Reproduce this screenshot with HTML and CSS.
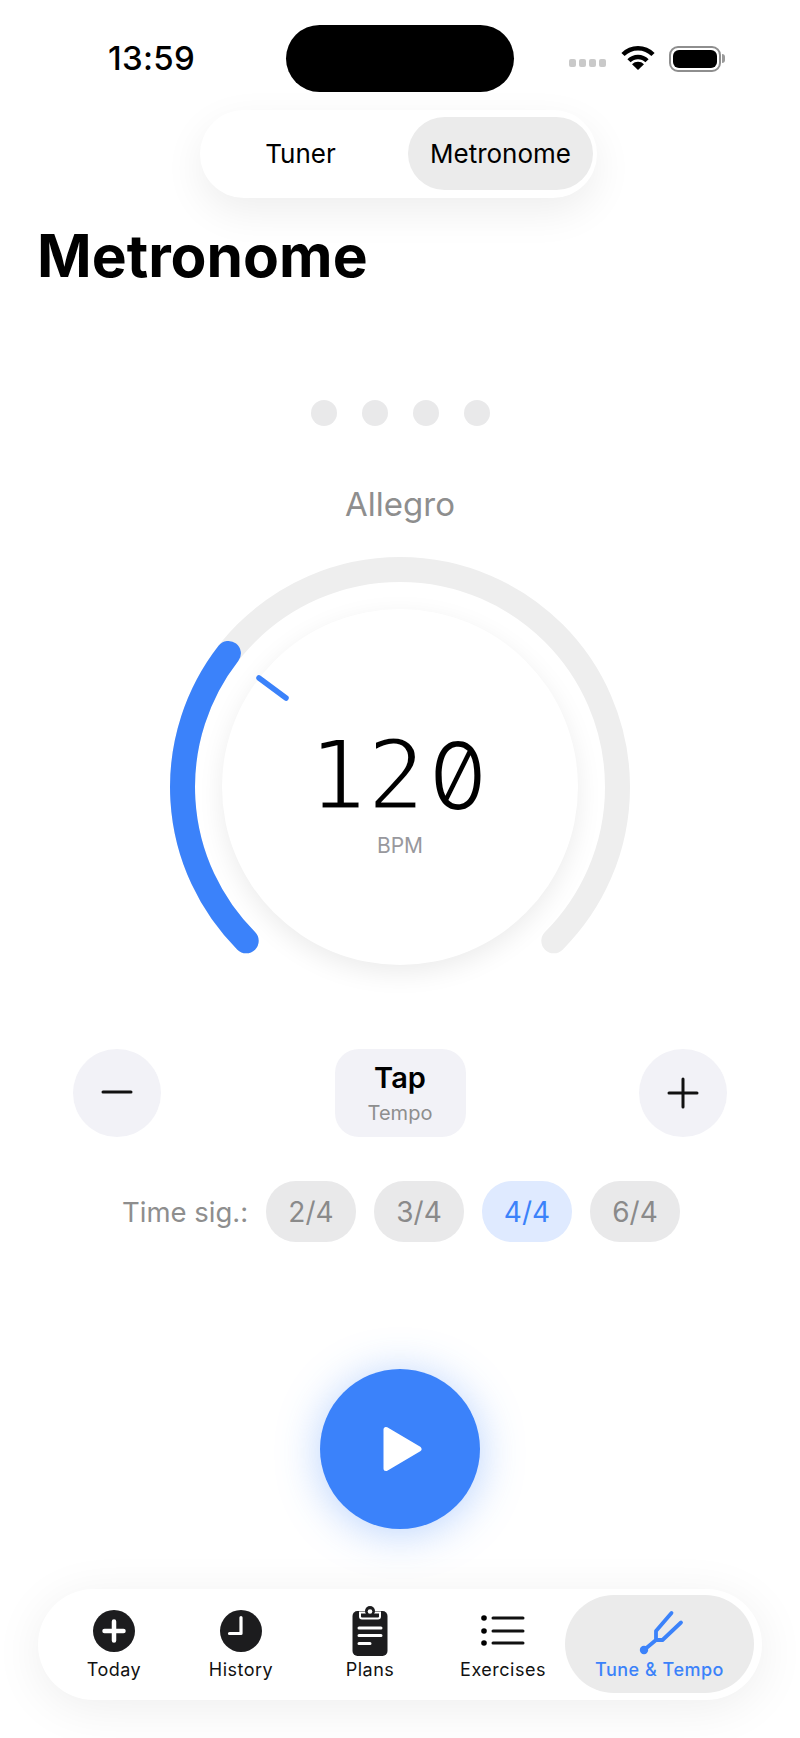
FILE: index.html
```html
<!DOCTYPE html>
<html lang="en">
<head>
<meta charset="utf-8">
<title>Metronome</title>
<link rel="stylesheet" href="styles.css">
</head>
<body>
<div class="screen">
  <header class="status">
    <div class="time">13:59</div>
    <div class="island"></div>
    <div class="status-right">
      <div class="signal"><i></i><i></i><i></i><i></i></div>
      <svg class="wifi" viewBox="0 0 34 25"><path d="M2 9.5A21 21 0 0 1 32 9.500" /><path d="M8 15.800A12.500 12.500 0 0 1 26 15.800" /><path class="wedge" d="M17 25L11 19.200A8.500 8.500 0 0 1 23 19.200Z"/></svg>
      <div class="battery"><div class="battery-fill"></div></div>
      <div class="battery-nub"></div>
    </div>
  </header>

  <nav class="segment">
    <div class="seg-item">Tuner</div>
    <div class="seg-item seg-active">Metronome</div>
  </nav>

  <h1 class="title">Metronome</h1>

  <div class="beats"><i></i><i></i><i></i><i></i></div>
  <div class="tempo-name">Allegro</div>

  <section class="dial">
    <div class="face">
      <div class="bpm"><span class="bpm-digit">1</span><span class="bpm-digit">2</span><span class="bpm-zero">0</span></div>
      <div class="bpm-label">BPM</div>
    </div>
    <svg class="arcs" viewBox="0 0 460 460">
      <path class="track" d="M76.200 383.800A217.500 217.500 0 1 1 383.800 383.800"/>
      <path class="fill" d="M76.200 383.800A217.500 217.500 0 0 1 58.400 96.400"/>
      <line class="tick" x1="89" y1="121" x2="116" y2="141"/>
    </svg>
  </section>

  <section class="controls">
    <button class="round-btn"><svg viewBox="0 0 32 32"><path d="M2 15h28"/></svg></button>
    <button class="tap"><span class="tap-main">Tap</span><span class="tap-sub">Tempo</span></button>
    <button class="round-btn"><svg viewBox="0 0 32 32"><path d="M16 2v28M2 16h28"/></svg></button>
  </section>

  <section class="sigs">
    <span class="sig-label">Time sig.:</span>
    <span class="sig">2/4</span>
    <span class="sig">3/4</span>
    <span class="sig sig-active">4/4</span>
    <span class="sig">6/4</span>
  </section>

  <button class="play"><svg viewBox="0 0 40 46"><path d="M3 3.500V42.500L36 23Z"/></svg></button>

  <nav class="tabs">
    <div class="tab">
      <svg class="tab-icon" viewBox="0 0 42 50"><circle cx="21" cy="25" r="21" fill="#1c1c1e"/><path d="M21 15.500v19M11.500 25h19" stroke="#fff" stroke-width="4.500" stroke-linecap="round" fill="none"/></svg>
      <span>Today</span>
    </div>
    <div class="tab">
      <svg class="tab-icon" viewBox="0 0 42 50"><circle cx="21" cy="25" r="21" fill="#1c1c1e"/><path d="M21 11.500V27.500H9.500" stroke="#fff" stroke-width="3.200" stroke-linecap="round" stroke-linejoin="round" fill="none"/></svg>
      <span>History</span>
    </div>
    <div class="tab">
      <svg class="tab-icon" viewBox="0 0 36 50"><rect x="0.500" y="5" width="35" height="45" rx="5" fill="#1c1c1e"/><path d="M8 6.500h20v4a2 2 0 0 1-2 2H10a2 2 0 0 1-2-2z" fill="#1c1c1e" stroke="#fff" stroke-width="2"/><circle cx="18" cy="5" r="5" fill="#1c1c1e"/><circle cx="18" cy="5.500" r="2.300" fill="#fff"/><path d="M7 22h22M7 29.500h22M7 37.500h11" stroke="#fff" stroke-width="3" stroke-linecap="round"/></svg>
      <span>Plans</span>
    </div>
    <div class="tab">
      <svg class="tab-icon" viewBox="0 0 44 50"><circle cx="3" cy="12" r="2.800"/><circle cx="3" cy="25" r="2.800"/><circle cx="3" cy="37" r="2.800"/><path d="M12 12h30M12 25h30M12 37h30" stroke="#111" stroke-width="3" stroke-linecap="round"/></svg>
      <span>Exercises</span>
    </div>
    <div class="tab tab-active">
      <svg class="tab-icon fork" viewBox="0 0 46 50"><circle cx="5" cy="44" r="4.200" fill="#3b82fa"/><path d="M5 44L17 34H23.500L42 16.500M17 34V25L32.500 7" stroke="#3b82fa" stroke-width="3.800" stroke-linecap="round" stroke-linejoin="round" fill="none"/></svg>
      <span>Tune &amp; Tempo</span>
    </div>
  </nav>
</div>
</body>
</html>
```

FILE: styles.css
```css
* { box-sizing: border-box; }
html, body { margin: 0; padding: 0; background: #fff; }
body { font-family: Inter, "Liberation Sans", sans-serif; color: #000; }
button { font: inherit; border: 0; padding: 0; color: inherit; }

.screen { width: 800px; height: 1738px; overflow: hidden; display: flex; flex-direction: column; }

.status { display: grid; grid-template-columns: 286px 228px 1fr; height: 67px; margin-top: 25px; align-items: center; }
.time { font-size: 33px; font-weight: 500; padding-left: 108px; line-height: 1; letter-spacing: 0.3px; }
.island { height: 67px; background: #000; border-radius: 34px; }
.status-right { display: flex; align-items: center; padding-left: 55px; }
.signal { display: flex; gap: 3px; margin-top: 9px; margin-right: 15px; }
.signal i { width: 7px; height: 8px; background: #c9c9c9; border-radius: 2px; }
.wifi { width: 34px; height: 25px; fill: none; stroke: #000; stroke-width: 4.5; margin-right: 14px; margin-top: -2px; }
.wifi .wedge { fill: #000; stroke: none; }
.battery { width: 52px; height: 26px; border: 2px solid #8e8e8e; border-radius: 9px; padding: 2px; }
.battery-fill { width: 100%; height: 100%; background: #000; border-radius: 6px; }
.battery-nub { width: 3px; height: 9px; background: #9a9a9a; border-radius: 0 3px 3px 0; margin-left: 1px; }

.segment { align-self: flex-start; margin: 18px 0 0 200px; width: 397px; height: 88px; background: #fff; border-radius: 44px; padding: 7px 4px 8px 0; display: flex; box-shadow: 0 14px 40px rgba(0,0,0,.07); }
.seg-item { display: flex; align-items: center; justify-content: center; font-size: 26px; border-radius: 37px; }
.seg-item:first-child { flex: 1; padding-right: 7px; }
.seg-active { width: 185px; background: #ebebeb; }

.title { margin: 23px 0 0 37px; font-size: 58.700px; line-height: 70px; font-weight: 700; }

.beats { display: flex; justify-content: center; gap: 25px; margin-top: 109px; }
.beats i { width: 26px; height: 26px; border-radius: 50%; background: #e9e9ea; }

.tempo-name { text-align: center; font-size: 33px; line-height: 40px; color: #8e8e8e; margin-top: 58px; }

.dial { display: grid; width: 460px; height: 460px; align-self: center; margin-top: 33px; }
.face, .arcs { grid-area: 1 / 1; }
.arcs { width: 460px; height: 460px; fill: none; }
.track { stroke: #eeeeee; stroke-width: 25; stroke-linecap: round; }
.fill { stroke: #3b82fa; stroke-width: 25; stroke-linecap: round; }
.tick { stroke: #3b82fa; stroke-width: 5.5; stroke-linecap: round; }
.face { width: 356px; height: 356px; place-self: center; border-radius: 50%; background: #fff; box-shadow: 0 8px 26px rgba(0,0,0,.08); display: flex; flex-direction: column; align-items: center; padding-top: 112px; }
.bpm { display: flex; align-items: baseline; height: 110px; line-height: 110px; margin-left: -4px; }
.bpm-digit { font-family: "DejaVu Sans Mono", monospace; font-size: 97px; -webkit-text-stroke: 3px #fff; }
.bpm-zero { font-size: 92px; font-weight: 300; font-feature-settings: "zero" 1, "tnum" 1; margin-left: 3px; }
.bpm-label { font-size: 21px; line-height: 24px; color: #98989d; margin-top: 3px; }

.controls { display: flex; justify-content: space-between; align-items: center; margin: 32px 73px 0; }
.round-btn { width: 88px; height: 88px; border-radius: 50%; background: #f2f2f7; display: flex; align-items: center; justify-content: center; }
.round-btn svg { width: 32px; height: 32px; fill: none; stroke: #111; stroke-width: 3; stroke-linecap: round; }
.tap { width: 131px; height: 88px; border-radius: 24px; background: #f2f2f7; display: flex; flex-direction: column; align-items: center; justify-content: center; }
.tap-main { font-size: 29px; line-height: 34px; font-weight: 600; margin-top: -1px; }
.tap-sub { font-size: 20px; line-height: 24px; color: #8e8e8e; margin-top: 6px; }

.sigs { display: flex; align-items: center; margin: 44px 0 0 122px; gap: 18px; }
.sig-label { font-size: 27.500px; color: #8e8e8e; width: 126px; white-space: nowrap; }
.sig { width: 90px; height: 61px; border-radius: 30px; background: #e9e9ea; color: #8a8a8a; font-size: 28px; display: flex; align-items: center; justify-content: center; }
.sig-active { background: #dfeaff; color: #3b82fa; }

.play { width: 160px; height: 160px; border-radius: 50%; background: #3b82fa; align-self: center; margin-top: 127px; display: flex; align-items: center; justify-content: center; box-shadow: 0 4px 44px rgba(59,130,250,.36); }
.play svg { width: 40px; height: 46px; margin-left: 5px; fill: #fff; stroke: #fff; stroke-width: 5; stroke-linejoin: round; }

.tabs { margin: 60px 38px 0; height: 111px; background: #fff; border-radius: 56px; box-shadow: 0 8px 50px rgba(0,0,0,.07); display: grid; grid-template-columns: 138px 116px 142px 124px 189px; padding: 6px 0 7px 7px; }
.tab { display: flex; flex-direction: column; align-items: center; justify-content: flex-end; font-size: 18px; font-weight: 400; line-height: 22px; letter-spacing: 0.5px; color: #111; padding-bottom: 12px; white-space: nowrap; }
.tab-icon { height: 50px; margin-bottom: 3px; }
.fork { margin-left: 5px; }
.tab-active { background: #ebebeb; border-radius: 49px; color: #3b82fa; font-weight: 500; }
```
